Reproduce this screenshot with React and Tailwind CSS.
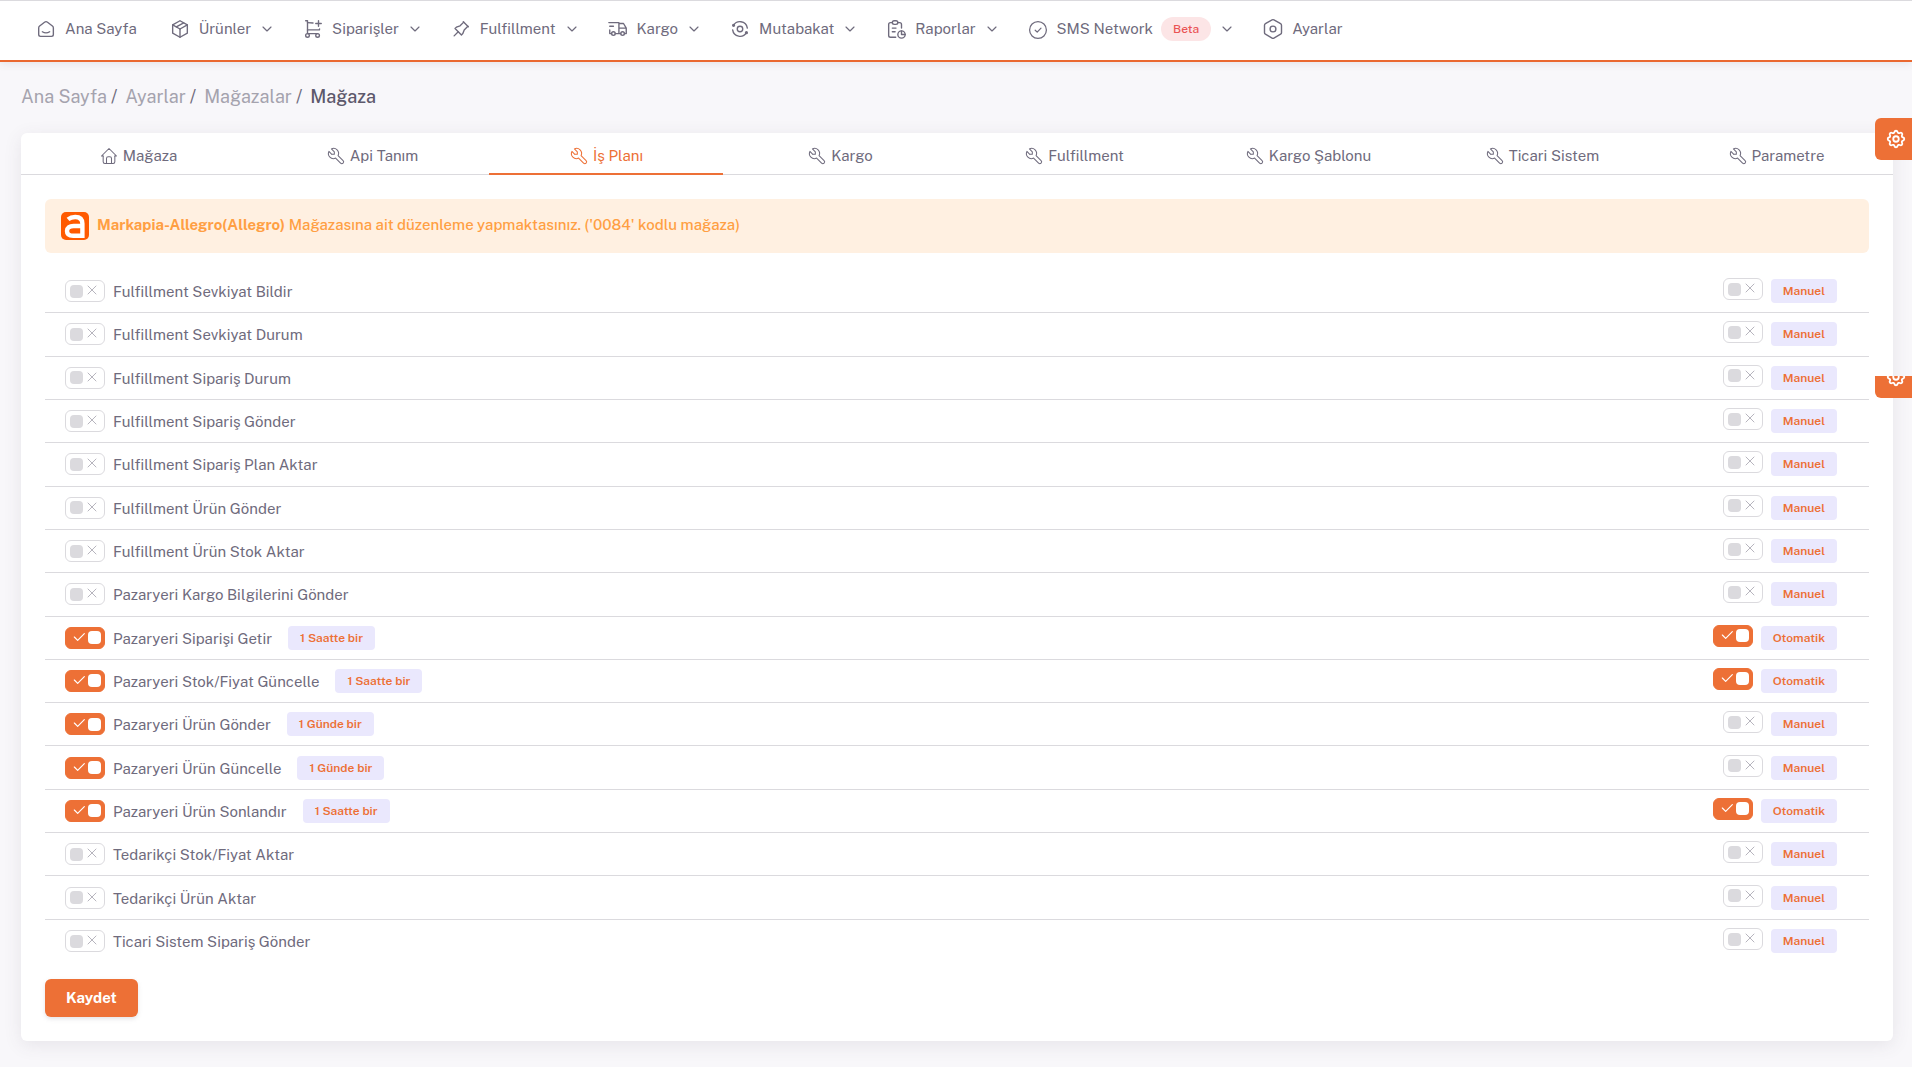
import { useState } from "react";
import {
  TbAnalyze, TbCheck, TbChevronDown, TbHome, TbPackage, TbPin, TbReport, TbSettings,
  TbSmartHome, TbTool, TbTruckDelivery, TbX
} from "react-icons/tb";

const CartPlusIcon = ({ size = 22, ...props }) => (
  <svg width={size} height={size} viewBox="0 0 24 24" fill="none" stroke="currentColor" strokeLinecap="round" strokeLinejoin="round" {...props}>
    <circle cx="6" cy="19" r="2" />
    <circle cx="17" cy="19" r="2" />
    <path d="M17 17H6V3H4" />
    <path d="M6 5l6.005.429m7.138 6.573l-.143.998H6" />
    <path d="M15 6h6m-3-3v6" />
  </svg>
);

const RoundCheckIcon = ({ size = 22, strokeWidth, ...props }) => (
  <svg width={size} height={size} viewBox="0 0 22 22" fill="none" stroke="currentColor" strokeWidth="1.25" strokeLinecap="round" strokeLinejoin="round" {...props}>
    <circle cx="11" cy="12" r="8.4" />
    <path d="M8.2 12.2l2 1.9 3.8-4" />
  </svg>
);

const HexagonIcon = ({ size = 22, strokeWidth, ...props }) => (
  <svg width={size} height={size} viewBox="0 0 22 22" fill="none" stroke="currentColor" strokeWidth="1.4" strokeLinecap="round" strokeLinejoin="round" {...props}>
    <path d="M10.1 1.9a1.8 1.8 0 0 1 1.8 0l6.7 3.7a1.8 1.8 0 0 1 .9 1.6v7.4a1.8 1.8 0 0 1-.9 1.6l-6.7 3.9a1.8 1.8 0 0 1-1.8 0l-6.7-3.9a1.8 1.8 0 0 1-.9-1.6v-7.4a1.8 1.8 0 0 1 .9-1.6z" />
    <circle cx="11" cy="11" r="2.9" />
  </svg>
);

const AllegroLogo = () => (
  <svg width="28" height="28" viewBox="0 0 28 28" fill="none">
    <rect width="28" height="28" rx="5" fill="#ff5a00" />
    <path d="M7 7.4C9.2 5.600 11.6 5 14.2 5c4.800 0 7.200 2.200 7.200 6.800v12H12.200c-4.200 0-6.200-1.600-6.200-4.800 0-3.400 2.400-5 6.600-5H20" stroke="#fff" strokeWidth="4.4" />
  </svg>
);

const MENU = [
  { label: "Ana Sayfa", icon: TbSmartHome },
  { label: "Ürünler", icon: TbPackage, children: true },
  { label: "Siparişler", icon: CartPlusIcon, children: true },
  { label: "Fulfillment", icon: TbPin, children: true },
  { label: "Kargo", icon: TbTruckDelivery, children: true },
  { label: "Mutabakat", icon: TbAnalyze, children: true },
  { label: "Raporlar", icon: TbReport, children: true },
  { label: "SMS Network", icon: RoundCheckIcon, badge: "Beta", children: true },
  { label: "Ayarlar", icon: HexagonIcon }
];

const BREADCRUMB = ["Ana Sayfa", "Ayarlar", "Mağazalar"];

const TABS = [
  { label: "Mağaza", icon: TbHome },
  { label: "Api Tanım", icon: TbTool },
  { label: "İş Planı", icon: TbTool },
  { label: "Kargo", icon: TbTool },
  { label: "Fulfillment", icon: TbTool },
  { label: "Kargo Şablonu", icon: TbTool },
  { label: "Ticari Sistem", icon: TbTool },
  { label: "Parametre", icon: TbTool }
];

const JOBS = [
  { label: "Fulfillment Sevkiyat Bildir" },
  { label: "Fulfillment Sevkiyat Durum" },
  { label: "Fulfillment Sipariş Durum" },
  { label: "Fulfillment Sipariş Gönder" },
  { label: "Fulfillment Sipariş Plan Aktar" },
  { label: "Fulfillment Ürün Gönder" },
  { label: "Fulfillment Ürün Stok Aktar" },
  { label: "Pazaryeri Kargo Bilgilerini Gönder" },
  { label: "Pazaryeri Siparişi Getir", active: true, period: "1 Saatte bir", auto: true },
  { label: "Pazaryeri Stok/Fiyat Güncelle", active: true, period: "1 Saatte bir", auto: true },
  { label: "Pazaryeri Ürün Gönder", active: true, period: "1 Günde bir" },
  { label: "Pazaryeri Ürün Güncelle", active: true, period: "1 Günde bir" },
  { label: "Pazaryeri Ürün Sonlandır", active: true, period: "1 Saatte bir", auto: true },
  { label: "Tedarikçi Stok/Fiyat Aktar" },
  { label: "Tedarikçi Ürün Aktar" },
  { label: "Ticari Sistem Sipariş Gönder" }
];

const Badge = ({ children }) => (
  <span className="h-6 px-3 rounded flex items-center bg-[#eae8fd] text-[#ed7036] text-xs font-semibold">{children}</span>
);

const Switch = ({ checked, onChange, ...props }) => (
  <span className="relative block w-10 h-[22px] shrink-0">
    <input type="checkbox" role="switch" checked={checked} onChange={e => onChange(e.target.checked)}
      className="appearance-none block w-10 h-[22px] rounded-md border border-[#dbdade] bg-white cursor-pointer checked:bg-[#ed7036] checked:border-[#ed7036]"
      {...props} />
    <span className={`absolute inset-0 flex items-center justify-between pointer-events-none ${checked ? "px-1 flex-row-reverse" : "px-[5px]"}`}>
      <span className={`w-[13px] h-[13px] rounded ${checked ? "bg-white" : "bg-[#dbdade]"}`} />
      {checked
        ? <TbCheck size={16} strokeWidth={1.75} className="ml-0.5 mb-0.5 text-white" />
        : <TbX size={16} strokeWidth={1.5} className="mb-0.5 text-[#b7b5be]" />}
    </span>
  </span>
);

const JobRow = ({ job, index }) => {
  const [active, setActive] = useState(!!job.active);
  const [auto, setAuto] = useState(!!job.auto);

  return (
    <li className="pl-5 pr-8 flex items-center justify-between border-b border-[#dbdade] last:border-b-0">
      <div className="flex items-center">
        <Switch id={`job-${index}`} checked={active} onChange={setActive} />
        <label htmlFor={`job-${index}`} className="pl-2 pr-4 pt-0.5 cursor-pointer">{job.label}</label>
        {job.period && <Badge>{job.period}</Badge>}
      </div>
      <div className="flex items-center gap-2">
        <div className="mb-1">
          <Switch aria-label={`${job.label} otomatik`} checked={auto} onChange={setAuto} />
        </div>
        <Badge>{auto ? "Otomatik" : "Manuel"}</Badge>
      </div>
    </li>
  );
};

const App = () => {
  const [tab, setTab] = useState("İş Planı");

  return (
    <div className="min-h-screen bg-[#f8f7fa] text-[#6f6b7d] text-[15px] leading-[22px] font-['Public_Sans','Inter',sans-serif]">
      <header className="h-[62px] px-[19px] flex items-center bg-white border-t border-t-[#dbdade] border-b-2 border-b-[#ea6830] shadow-[0_2px_8px_rgba(75,70,92,0.1)]">
        <nav className="flex items-center pb-1">
          {MENU.map(item => (
            <a key={item.label} href="#" className="px-4 flex items-center gap-2">
              <item.icon size={22} strokeWidth={1.5} />
              <span>{item.label}</span>
              {item.badge && <span className="h-6 px-3 rounded-full flex items-center bg-[#fce5e6] text-[#ea5455] text-xs font-medium">{item.badge}</span>}
              {item.children && <TbChevronDown size={16} strokeWidth={1.75} className="-mr-[5px]" />}
            </a>
          ))}
        </nav>
      </header>

      <main className="pl-[21px] pr-[19px] pt-6 pb-[26px]">
        <nav className="h-[23px] mb-6 pb-0.5 flex items-center gap-2 text-lg">
          {BREADCRUMB.map(crumb => (
            <span key={crumb} className="flex gap-1">
              <a href="#" className="text-[#a5a3ae]">{crumb}</a>
              <span>/</span>
            </span>
          ))}
          <span className="font-medium text-[#5d596c]">Mağaza</span>
        </nav>

        <section className="bg-white rounded-md shadow-[0_4px_18px_rgba(75,70,92,0.1)]">
          <div role="tablist" className="grid grid-cols-8 border-b border-[#dbdade]">
            {TABS.map(({ label, icon: Icon }) => (
              <button key={label} type="button" role="tab" aria-selected={tab === label} onClick={() => setTab(label)}
                className={`h-[42px] -mb-px pt-1.5 flex items-center justify-center gap-1 border-b-2 cursor-pointer ${tab === label ? "border-[#ed7036] text-[#ed7036]" : "border-transparent"}`}>
                <Icon size={20} strokeWidth={1.25} />
                {label}
              </button>
            ))}
          </div>

          <div className="p-6">
            <div className="h-[54px] px-4 flex items-center gap-2 rounded-md bg-[#fff0e1] text-[#ff9f43] font-medium">
              <AllegroLogo />
              <p className="pb-0.5"><strong className="font-bold">Markapia-Allegro(Allegro)</strong> Mağazasına ait düzenleme yapmaktasınız. ('0084' kodlu mağaza)</p>
            </div>

            <ul className="mt-[17px] mb-4 min-h-[693px] grid auto-rows-fr">
              {JOBS.map((job, i) => <JobRow key={job.label} job={job} index={i} />)}
            </ul>

            <button type="button" className="h-[38px] px-[21px] rounded-md bg-[#ed7036] text-white font-bold shadow-[0_2px_4px_rgba(165,163,174,0.3)] cursor-pointer">Kaydet</button>
          </div>
        </section>
      </main>

      <button type="button" aria-label="Ayarlar" className="fixed right-0 top-[118px] w-[37px] h-[42px] pl-1 flex items-center justify-center rounded-l-md bg-[#ed7036] text-white cursor-pointer">
        <TbSettings size={22} />
      </button>
      <div className="fixed right-0 top-[376px] h-[22px] overflow-hidden flex items-end">
        <button type="button" aria-label="Görünüm" className="w-[37px] h-[42px] shrink-0 pl-1 flex items-center justify-center rounded-l-md bg-[#ed7036] text-white cursor-pointer">
          <TbSettings size={22} />
        </button>
      </div>
    </div>
  );
};

export default App;
